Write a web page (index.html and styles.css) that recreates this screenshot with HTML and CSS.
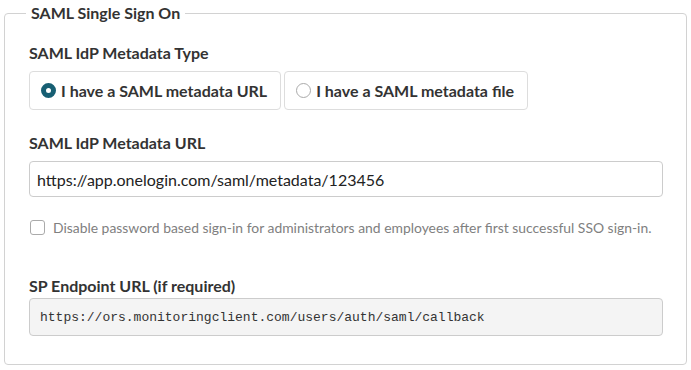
FILE: index.html
```html
<!DOCTYPE html>
<html lang="en">
<head>
  <meta charset="UTF-8" />
  <title>SAML Single Sign On</title>
  <link rel="stylesheet" href="styles.css">
</head>
<body>
  <fieldset class="sso">
    <legend>SAML Single Sign On</legend>

    <div class="field">
      <label class="field-label">SAML IdP Metadata Type</label>
      <div class="radio-group">
        <label class="radio-option">
          <input type="radio" name="metadata-type" checked />
          <span>I have a SAML metadata URL</span>
        </label>
        <label class="radio-option">
          <input type="radio" name="metadata-type" />
          <span>I have a SAML metadata file</span>
        </label>
      </div>
    </div>

    <div class="field">
      <label class="field-label" for="metadata-url">SAML IdP Metadata URL</label>
      <input type="text" id="metadata-url" class="text-input" value="https://app.onelogin.com/saml/metadata/123456" />
    </div>

    <label class="check-row">
      <input type="checkbox" />
      <span>Disable password based sign-in for administrators and employees after first successful SSO sign-in.</span>
    </label>

    <div class="field endpoint">
      <label class="field-label">SP Endpoint URL (if required)</label>
      <div class="code-box">https://ors.monitoringclient.com/users/auth/saml/callback</div>
    </div>
  </fieldset>
</body>
</html>
```

FILE: styles.css
```css
* {
  box-sizing: border-box;
  font-family: Lato, "Open Sans", sans-serif;
}
body {
  margin: 0;
  background: #fff;
  color: #333;
}
.sso {
  margin: 0 4px;
  padding: 17px 23px 28px 24px;
  border: 1px solid #d2d2d2;
  border-radius: 4px;
}
.sso legend {
  margin-left: -3px;
  padding: 0 5px;
  font-size: 16px;
  font-weight: 700;
  line-height: 26px;
  color: #333;
}
.field {
  margin-bottom: 23px;
}
.field-label {
  display: block;
  font-size: 16px;
  font-weight: 700;
  line-height: 20px;
  margin-bottom: 8px;
}
.radio-group {
  display: flex;
  gap: 3px;
}
.radio-option {
  display: flex;
  align-items: center;
  gap: 5px;
  height: 39px;
  padding: 0 13px 0 11px;
  border: 1px solid #ddd;
  border-radius: 4px;
  font-size: 16px;
  font-weight: 700;
  cursor: pointer;
}
.radio-option input {
  appearance: none;
  margin: 0;
  width: 15px;
  height: 15px;
  border: 1px solid #aaa;
  border-radius: 50%;
  background: #fff;
}
.radio-option input:checked {
  border: 5px solid #175f73;
}
.text-input {
  display: block;
  width: 100%;
  height: 36px;
  padding: 0 7px;
  border: 1px solid #ccc;
  border-radius: 4px;
  font-size: 16px;
  color: #222;
}
.check-row {
  display: flex;
  align-items: center;
  gap: 8px;
  margin-top: -1px;
  padding-left: 1px;
  font-size: 13.9px;
  color: #808080;
}
.check-row input {
  appearance: none;
  margin: 0;
  width: 15px;
  height: 15px;
  border: 1px solid #aaa;
  border-radius: 3px;
  background: #fff;
}
.endpoint {
  margin-top: 40px;
  margin-bottom: 0;
}
.endpoint .field-label {
  margin-bottom: 2px;
}
.code-box {
  height: 38px;
  padding: 0 10px;
  display: flex;
  align-items: center;
  background: #f4f4f4;
  border: 1px solid #ccc;
  border-radius: 4px;
  font-family: "Liberation Mono", monospace;
  font-size: 13px;
  color: #333;
}
```
